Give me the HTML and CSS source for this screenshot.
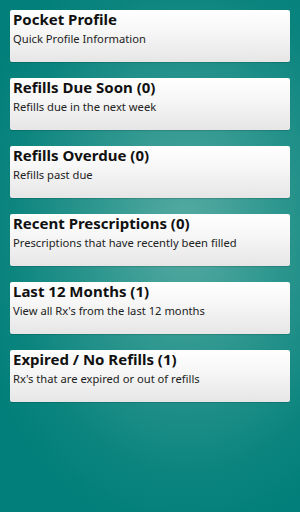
FILE: index.html
```html
<!DOCTYPE html>
<html lang="en">
<head>
  <meta charset="UTF-8">
  <meta name="viewport" content="width=device-width, initial-scale=1.0">
  <title>Pocket Profile</title>
  <link rel="stylesheet" href="styles.css">
</head>
<body>
  <div class="menu">
    <div class="card">
      <h2 class="card-title">Pocket Profile</h2>
      <p class="card-desc">Quick Profile Information</p>
    </div>
    <div class="card">
      <h2 class="card-title">Refills Due Soon (0)</h2>
      <p class="card-desc">Refills due in the next week</p>
    </div>
    <div class="card">
      <h2 class="card-title">Refills Overdue (0)</h2>
      <p class="card-desc">Refills past due</p>
    </div>
    <div class="card">
      <h2 class="card-title">Recent Prescriptions (0)</h2>
      <p class="card-desc">Prescriptions that have recently been filled</p>
    </div>
    <div class="card">
      <h2 class="card-title">Last 12 Months (1)</h2>
      <p class="card-desc">View all Rx's from the last 12 months</p>
    </div>
    <div class="card">
      <h2 class="card-title">Expired / No Refills (1)</h2>
      <p class="card-desc">Rx's that are expired or out of refills</p>
    </div>
  </div>
</body>
</html>
```
FILE: styles.css
```css
html, body {
  height: 100%;
}

body {
  margin: 0;
  background: radial-gradient(ellipse 75% 60% at 62% 45%, #57aba3 0%, #2a958d 45%, #0b847e 80%, #027f7a 100%);
  font-family: "Noto Sans", "Open Sans", sans-serif;
  color: #111;
}

.menu {
  display: flex;
  flex-direction: column;
  gap: 16px;
  padding: 10px;
}

.card {
  height: 52px;
  box-sizing: border-box;
  padding: 1px 3px 0;
  background: linear-gradient(#ffffff, #f7f7f7 40%, #e6e6e6);
  border-radius: 2px;
  box-shadow: 0 1px 1px rgba(0, 0, 0, 0.15);
}

.card-title {
  margin: 0;
  font-size: 15px;
  font-weight: bold;
  line-height: 16px;
}

.card-desc {
  margin: 5px 0 0;
  font-size: 11.2px;
  line-height: 14px;
  color: #222;
}
```
